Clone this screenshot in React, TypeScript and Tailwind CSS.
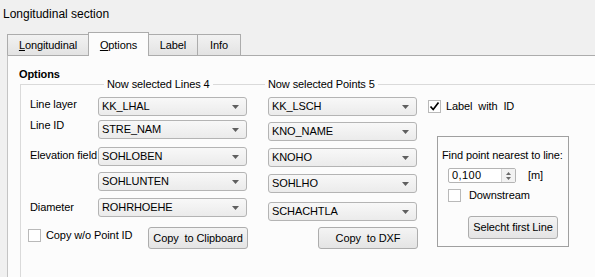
const body = "font-['Liberation_Sans',Arial,sans-serif] text-[11px] leading-[13px] tracking-[-0.1px] text-black";

function Arrow() {
  return (
    <svg width="7" height="4" viewBox="0 0 7 4" className="shrink-0">
      <polygon points="0,0 7,0 3.5,4" fill="#5f5f5f" />
    </svg>
  );
}

function Combo({ value, className = '' }: { value: string; className?: string }) {
  return (
    <div
      className={`flex h-[19px] w-[149px] items-center justify-between rounded-[3px] border border-[#b4b4b4] bg-linear-to-b from-[#f8f8f8] to-[#ebebeb] pl-[3px] pr-[7px] ${className}`}
    >
      <span>{value}</span>
      <Arrow />
    </div>
  );
}

function Check({ checked = false }: { checked?: boolean }) {
  return (
    <span className="flex h-[13px] w-[13px] shrink-0 items-center justify-center border border-[#b9b9b9] bg-white">
      {checked && (
        <svg width="11" height="11" viewBox="0 0 11 11">
          <path d="M1.5 5.5 L4.2 8.5 L9.5 1.5" fill="none" stroke="#000" strokeWidth="1.7" />
        </svg>
      )}
    </span>
  );
}

function Button({ label, className = '' }: { label: string; className?: string }) {
  return (
    <button
      type="button"
      className={`flex items-center justify-center whitespace-pre rounded-[3px] border border-[#adadad] bg-linear-to-b from-[#f4f4f4] to-[#e4e4e4] ${className}`}
    >
      {label}
    </button>
  );
}

function Tab({ children, active = false, className = '' }: { children: React.ReactNode; active?: boolean; className?: string }) {
  return (
    <div
      className={`flex items-center justify-center border border-b-0 border-[#acacac] ${
        active ? 'relative z-10 -mb-px h-[24px] bg-[#fcfcfc] pt-[1px]' : 'h-[21px] bg-linear-to-b from-[#f2f2f2] to-[#e3e3e3]'
      } ${className}`}
    >
      {children}
    </div>
  );
}

export default function App() {
  return (
    <div className={`flex h-[277px] w-[595px] flex-col overflow-hidden bg-[#f0f0f0] ${body}`}>
      {/* Window title */}
      <div className="pl-[3px] pt-[7px] text-[12px] leading-[14px] tracking-normal">Longitudinal section</div>

      {/* Tabs */}
      <div className="ml-[7px] mt-[11px] flex items-end">
        <Tab className="w-[82px]">
          <span>
            <span className="underline">L</span>ongitudinal
          </span>
        </Tab>
        <Tab active className="-ml-px w-[61px]">
          <span>
            <span className="underline">O</span>ptions
          </span>
        </Tab>
        <Tab className="-ml-px w-[50px]">Label</Tab>
        <Tab className="-ml-px w-[44px]">Info</Tab>
      </div>

      {/* Tab pane */}
      <div className="ml-[7px] flex flex-1 flex-col border-l border-t border-l-[#c4c4c4] border-t-[#acacac] bg-[#fcfcfc]">
        <div className="pl-[11px] pt-[12px] font-bold">Options</div>

        <div className="ml-[12px] mt-[3px] flex flex-1 items-start border-l border-t border-[#dadada] pl-[9px]">
          {/* Labels */}
          <div className="flex w-[68px] flex-col whitespace-nowrap">
            <span className="mt-[13px]">Line layer</span>
            <span className="mt-[8px]">Line ID</span>
            <span className="mt-[17px]">Elevation field</span>
            <span className="mt-[39px]">Diameter</span>
            <label className="-ml-[2px] mt-[15px] flex items-center gap-[5px]">
              <Check />
              <span>Copy w/o Point ID</span>
            </label>
          </div>

          {/* Lines */}
          <div className="flex w-[149px] flex-col">
            <span className="-mt-[7px] ml-[6px] self-start whitespace-nowrap bg-[#fcfcfc] px-[3px]">Now selected Lines 4</span>
            <Combo value="KK_LHAL" className="mt-[6px]" />
            <Combo value="STRE_NAM" className="mt-[4px]" />
            <Combo value="SOHLOBEN" className="mt-[8px]" />
            <Combo value="SOHLUNTEN" className="mt-[6px]" />
            <Combo value="ROHRHOEHE" className="mt-[7px]" />
            <Button label="Copy  to Clipboard" className="ml-[50px] mt-[10px] h-[22px] w-[100px]" />
          </div>

          {/* Points */}
          <div className="ml-[21px] flex w-[149px] flex-col">
            <span className="-ml-[3px] -mt-[7px] self-start whitespace-nowrap bg-[#fcfcfc] px-[3px]">Now selected Points 5</span>
            <Combo value="KK_LSCH" className="mt-[6px]" />
            <Combo value="KNO_NAME" className="mt-[6px]" />
            <Combo value="KNOHO" className="mt-[7px]" />
            <Combo value="SOHLHO" className="mt-[7px]" />
            <Combo value="SCHACHTLA" className="mt-[9px]" />
            <Button label="Copy  to DXF" className="ml-[50px] mt-[6px] h-[22px] w-[100px]" />
          </div>

          {/* Right side */}
          <div className="ml-[11px] flex flex-col">
            <label className="mt-[15px] flex items-center gap-[5px] whitespace-pre">
              <Check checked />
              <span>Label  with  ID</span>
            </label>

            <div className="ml-[9px] mt-[23px] flex h-[111px] w-[132px] flex-col border border-[#a0a0a0] pl-[4px]">
              <span className="mt-[12px] whitespace-nowrap">Find point nearest to line:</span>
              <div className="ml-[6px] mt-[6px] flex items-center">
                <div className="flex h-[15px] w-[68px] items-center rounded-[2px] border border-[#b4b4b4] bg-white">
                  <span className="flex-1 pl-[3px] tracking-[0.4px]">0,100</span>
                  <div className="flex h-full w-[14px] flex-col items-center justify-center gap-[2px] border-l border-[#d4d4d4] bg-[#f2f2f2]">
                    <svg width="5" height="3" viewBox="0 0 5 3">
                      <polygon points="2.5,0 5,3 0,3" fill="#6a6a6a" />
                    </svg>
                    <svg width="5" height="3" viewBox="0 0 5 3">
                      <polygon points="0,0 5,0 2.5,3" fill="#6a6a6a" />
                    </svg>
                  </div>
                </div>
                <span className="ml-[12px]">[m]</span>
              </div>
              <label className="ml-[6px] mt-[6px] flex items-center gap-[8px]">
                <Check />
                <span>Downstream</span>
              </label>
              <Button label="Selecht first Line" className="ml-[26px] mt-[14px] h-[23px] w-[90px]" />
            </div>
          </div>
        </div>
      </div>
    </div>
  );
}
